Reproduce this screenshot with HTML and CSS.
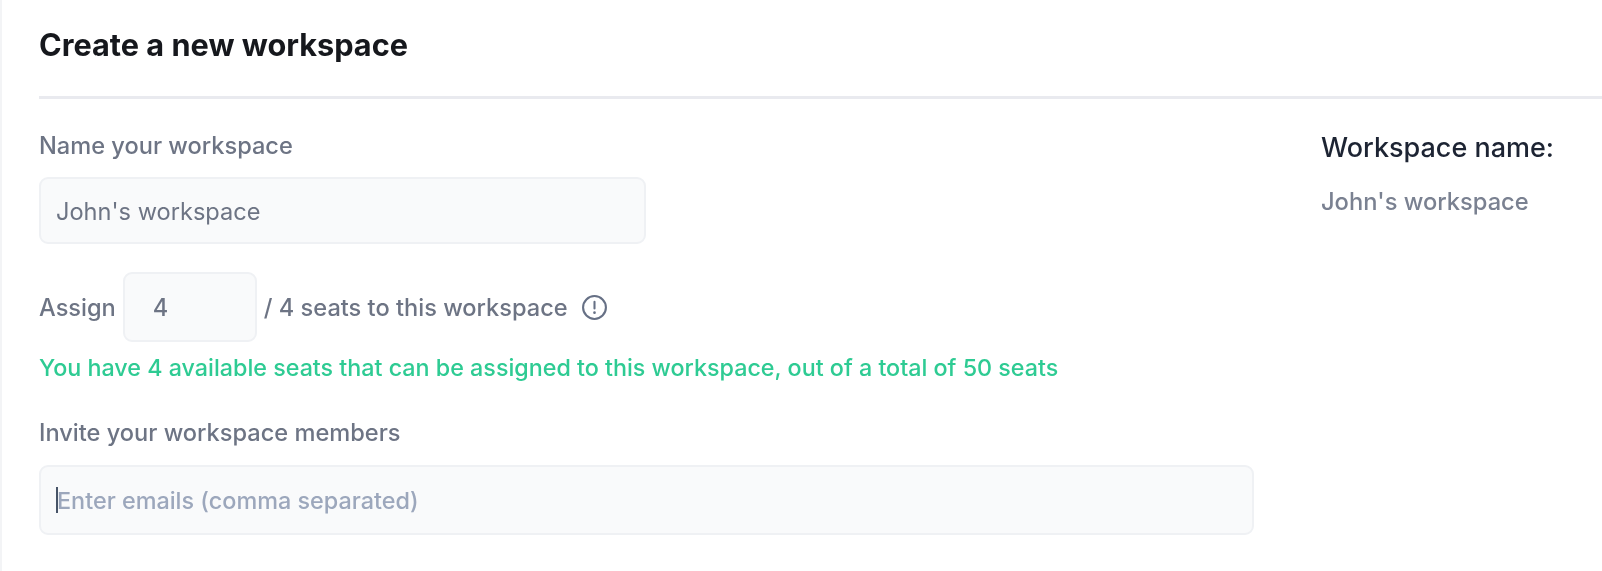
FILE: index.html
```html
<!DOCTYPE html>
<html lang="en">
<head>
<meta charset="utf-8">
<title>Create a new workspace</title>
<link rel="stylesheet" href="styles.css">
</head>
<body>
<main class="panel">
  <h1 class="title">Create a new workspace</h1>
  <div class="content">
    <form class="form">
      <label class="label label-name">Name your workspace</label>
      <div class="field field-name">John's workspace</div>
      <div class="assign">
        <span>Assign</span>
        <div class="field field-seats">4</div>
        <span>/ 4 seats to this workspace</span>
        <svg class="info" viewBox="0 0 26 26" width="27" height="27" aria-hidden="true">
          <circle cx="13" cy="13" r="11" fill="none" stroke="#667085" stroke-width="2"/>
          <path d="M13 7.5v6.5" stroke="#667085" stroke-width="2" stroke-linecap="round"/>
          <circle cx="13" cy="18" r="1.3" fill="#667085"/>
        </svg>
      </div>
      <p class="hint">You have 4 available seats that can be assigned to this workspace, out of a total of 50 seats</p>
      <label class="label label-invite">Invite your workspace members</label>
      <div class="field field-emails"><span class="caret"></span>Enter emails (comma separated)</div>
    </form>
    <aside class="summary">
      <h2 class="summary-title">Workspace name:</h2>
      <p class="summary-value">John's workspace</p>
    </aside>
  </div>
</main>
</body>
</html>
```
FILE: styles.css
```css
* { box-sizing: border-box; }
html, body { margin: 0; height: 100%; background: #fff; }
body { font-family: Inter, "Liberation Sans", sans-serif; overflow: hidden; }
.panel { height: 571px; padding-left: 37px; border-left: 2px solid #f3f4f6; filter: blur(0.7px); }
.title { margin: 0; height: 99px; padding-top: 27px; font-size: 30.7px; line-height: 36px; font-weight: 700; color: #16181d; border-bottom: 3px solid #e9eaef; }
.content { display: flex; }
.form { width: 1215px; flex: none; }
.label { display: block; font-size: 23.6px; line-height: 28px; font-weight: 500; color: #6d7484; }
.label-name { margin-top: 33px; }
.field { background: #f9fafb; border: 2px solid #eff1f4; border-radius: 9px; font-size: 23.6px; font-weight: 400; color: #6d7484; display: flex; align-items: center; }
.field-name { width: 607px; height: 67px; margin-top: 17px; padding: 2px 0 0 15px; }
.assign { display: flex; align-items: center; margin-top: 28px; font-size: 23.6px; font-weight: 500; color: #6d7484; }
.field-seats { width: 134px; height: 70px; margin: 0 7px; padding-left: 28px; font-weight: 500; }
.info { margin-left: 13px; }
.hint { margin: 12px 0 0; font-size: 23.3px; line-height: 28px; font-weight: 500; color: #2ecb93; white-space: nowrap; }
.label-invite { margin-top: 37px; }
.field-emails { width: 1215px; height: 70px; margin-top: 18px; padding-left: 15px; font-size: 23.4px; font-weight: 500; color: #9ca7bc; }
.caret { width: 2px; height: 26px; margin-right: -1px; background: #475467; }
.summary { margin-left: 67px; padding-top: 33px; }
.summary-title { margin: 0; font-size: 27px; line-height: 32px; font-weight: 500; color: #1d2433; }
.summary-value { margin: 24px 0 0; font-size: 23.7px; line-height: 28px; font-weight: 500; color: #7a8191; }
```
